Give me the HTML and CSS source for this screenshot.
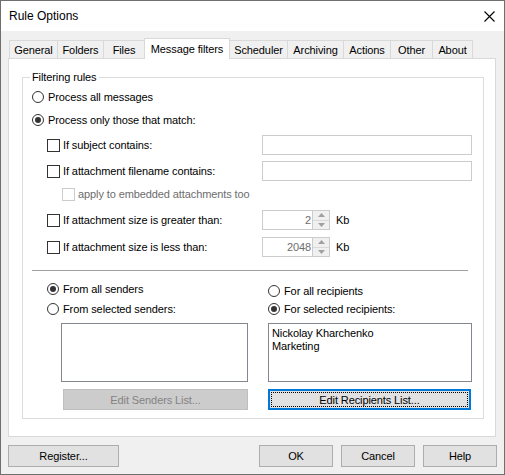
FILE: index.html
```html
<!DOCTYPE html>
<html>
<head>
<meta charset="utf-8">
<link rel="stylesheet" href="styles.css">
</head>
<body>
<div class="window">
  <div class="titlebar">
    <span class="title">Rule Options</span>
    <svg class="close" width="11" height="11" viewBox="0 0 11 11"><path d="M0.5 0.5 L10.5 10.5 M10.5 0.5 L0.5 10.5" stroke="#000" stroke-width="1.1" fill="none"/></svg>
  </div>
  <div class="tabs">
    <div class="tab t-general">General</div>
    <div class="tab t-folders">Folders</div>
    <div class="tab t-files">Files</div>
    <div class="tab selected t-msg">Message filters</div>
    <div class="tab t-sched">Scheduler</div>
    <div class="tab t-arch">Archiving</div>
    <div class="tab t-actions">Actions</div>
    <div class="tab t-other">Other</div>
    <div class="tab t-about">About</div>
  </div>
  <div class="panel">
    <div class="group">
      <span class="group-label">Filtering rules</span>
      <div class="row r1"><span class="radio"></span><span>Process all messages</span></div>
      <div class="row r2"><span class="radio checked"></span><span>Process only those that match:</span></div>
      <div class="row r3 indent"><span class="cond-label"><span class="check"></span><span>If subject contains:</span></span><span class="textbox"></span></div>
      <div class="row r4 indent"><span class="cond-label"><span class="check"></span><span>If attachment filename contains:</span></span><span class="textbox"></span></div>
      <div class="row r5 indent2 disabled"><span class="check dis"></span><span>apply to embedded attachments too</span></div>
      <div class="row r6 indent"><span class="cond-label"><span class="check"></span><span>If attachment size is greater than:</span></span><span class="spin"><span class="spin-val">2</span><span class="spin-btns"><span class="spin-up"><svg width="7" height="4" viewBox="0 0 7 4"><path d="M0 4 L3.5 0 L7 4 Z" fill="#a0a0a0"/></svg></span><span class="spin-down"><svg width="7" height="4" viewBox="0 0 7 4"><path d="M0 0 L3.5 4 L7 0 Z" fill="#a0a0a0"/></svg></span></span></span><span class="unit">Kb</span></div>
      <div class="row r7 indent"><span class="cond-label"><span class="check"></span><span>If attachment size is less than:</span></span><span class="spin"><span class="spin-val">2048</span><span class="spin-btns"><span class="spin-up"><svg width="7" height="4" viewBox="0 0 7 4"><path d="M0 4 L3.5 0 L7 4 Z" fill="#a0a0a0"/></svg></span><span class="spin-down"><svg width="7" height="4" viewBox="0 0 7 4"><path d="M0 0 L3.5 4 L7 0 Z" fill="#a0a0a0"/></svg></span></span></span><span class="unit">Kb</span></div>
      <div class="separator"></div>
      <div class="who">
        <div class="row rr"><span class="radio checked"></span><span>From all senders</span></div>
        <div class="row rr shift"><span class="radio"></span><span>For all recipients</span></div>
        <div class="row rr rr2"><span class="radio"></span><span>From selected senders:</span></div>
        <div class="row rr rr2"><span class="radio checked"></span><span>For selected recipients:</span></div>
        <div class="list list-left"></div>
        <div class="list list-right"><div>Nickolay Kharchenko</div><div>Marketing</div></div>
        <div class="btn btn-disabled btn-left">Edit Senders List...</div>
        <div class="btn btn-focus btn-right"><span class="focus-ring">Edit Recipients List...</span></div>
      </div>
    </div>
  </div>
  <div class="footer">
    <div class="btn btn-reg">Register...</div>
    <div class="footer-right">
      <div class="btn btn-std">OK</div>
      <div class="btn btn-std">Cancel</div>
      <div class="btn btn-std">Help</div>
    </div>
  </div>
</div>
</body>
</html>
```
FILE: styles.css
```css
* { box-sizing: border-box; }
body {
  margin: 0;
  font-family: "Liberation Sans", Arial, sans-serif;
  font-size: 11px;
  letter-spacing: -0.1px;
  color: #000;
}
.window {
  width: 505px;
  height: 475px;
  border: 1px solid #6f6f6f;
  background: #f0f0f0;
  display: flex;
  flex-direction: column;
}
.titlebar {
  height: 30px;
  background: #fff;
  display: flex;
  align-items: center;
  justify-content: space-between;
  padding: 0 8px 0 8px;
  font-size: 12px;
  letter-spacing: 0;
}
.close { margin-right: 1px; }
.tabs {
  margin-top: 7px;
  height: 20px;
  padding-left: 8px;
  display: flex;
  align-items: flex-end;
}
.tab {
  height: 18px;
  border: 1px solid #d9d9d9;
  border-bottom: none;
  margin-right: -1px;
  display: flex;
  align-items: center;
  justify-content: center;
  background: #f0f0f0;
  padding-top: 1px;
}
.tab.selected {
  height: 21px;
  margin-bottom: -1px;
  background: #fff;
  position: relative;
  z-index: 1;
  padding-top: 0;
  padding-bottom: 1px;
}
.t-general { width: 49px; }
.t-folders { width: 47px; }
.t-files { width: 42px; }
.t-msg { width: 86px; }
.t-sched { width: 59px; }
.t-arch { width: 57px; }
.t-actions { width: 48px; }
.t-other { width: 43px; }
.t-about { width: 41px; }
.panel {
  margin: 0 8px 0 7px;
  height: 379px;
  background: #fff;
  border: 1px solid #d9d9d9;
  padding: 18px 11px 0 13px;
}
.group {
  position: relative;
  border: 1px solid #dcdcdc;
  padding: 9px 11px 8px 9px;
}
.group-label {
  position: absolute;
  top: -8px;
  left: 7px;
  background: #fff;
  padding: 0 2px;
  line-height: 14px;
}
.row {
  display: flex;
  align-items: center;
  height: 20px;
  white-space: nowrap;
}
.r2 { margin-top: 3px; }
.r3 { margin-top: 5px; }
.r4 { margin-top: 6px; }
.r5 { margin-top: 3px; }
.r6 { margin-top: 6px; }
.r7 { margin-top: 7px; }
.indent { margin-left: 15px; }
.indent2 { margin-left: 30px; }
.cond-label {
  width: 215px;
  display: flex;
  align-items: center;
}
.radio {
  width: 12px;
  height: 12px;
  border: 1px solid #333;
  border-radius: 50%;
  margin-right: 4px;
  display: flex;
  align-items: center;
  justify-content: center;
  background: #fff;
  flex: none;
}
.radio.checked::after {
  content: "";
  width: 6px;
  height: 6px;
  border-radius: 50%;
  background: #333;
}
.check {
  width: 13px;
  height: 13px;
  border: 1px solid #333;
  background: #fff;
  margin-right: 3px;
  flex: none;
}
.check.dis { border-color: #cccccc; }
.disabled { color: #6d6d6d; }
.textbox {
  width: 210px;
  height: 20px;
  border: 1px solid #cccccc;
  background: #fff;
}
.spin {
  width: 68px;
  height: 20px;
  border: 1px solid #cccccc;
  background: #fff;
  display: flex;
}
.spin-val {
  flex: 1;
  text-align: right;
  color: #6d6d6d;
  padding-right: 1px;
  line-height: 18px;
}
.spin-btns {
  width: 17px;
  display: flex;
  flex-direction: column;
  border-left: 1px solid #cccccc;
}
.spin-up, .spin-down {
  flex: 1;
  display: flex;
  align-items: center;
  justify-content: center;
  background: #f0f0f0;
}
.spin-up { border-bottom: 1px solid #d9d9d9; }
.unit { margin-left: 6px; }
.separator {
  margin: 13px 4px 0 0;
  height: 1px;
  background: #a0a0a0;
}
.who {
  margin-left: 15px;
  margin-top: 10px;
  display: grid;
  grid-template-columns: 201px 204px;
  column-gap: 20px;
  grid-template-rows: 16px auto auto auto;
}
.rr { height: 16px; }
.shift { align-self: start; margin-top: 2px; }
.rr2 { margin-top: 4px; }
.list {
  margin-top: 6px;
  height: 59px;
  border: 1px solid #828790;
  background: #fff;
}
.list-left { margin-left: 14px; width: 187px; }
.list-right { width: 204px; padding: 3px 3px; line-height: 13px; }
.btn {
  display: flex;
  align-items: center;
  justify-content: center;
  background: #e1e1e1;
  border: 1px solid #adadad;
  height: 21px;
}
.who .btn { margin-top: 7px; }
.btn-left { margin-left: 16px; width: 185px; }
.btn-disabled {
  background: #cccccc;
  border-color: #bfbfbf;
  color: #838383;
}
.btn-focus {
  width: 203px;
  border: 2px solid #0078d7;
  padding: 1px;
}
.focus-ring {
  width: 100%;
  height: 100%;
  border: 1px dotted #000;
  display: flex;
  align-items: center;
  justify-content: center;
}
.footer {
  margin: 8px 7px 0 7px;
  display: flex;
  justify-content: space-between;
}
.footer-right { display: flex; gap: 8px; }
.btn-reg { width: 111px; height: 22px; }
.btn-std { width: 74px; height: 22px; }
```
